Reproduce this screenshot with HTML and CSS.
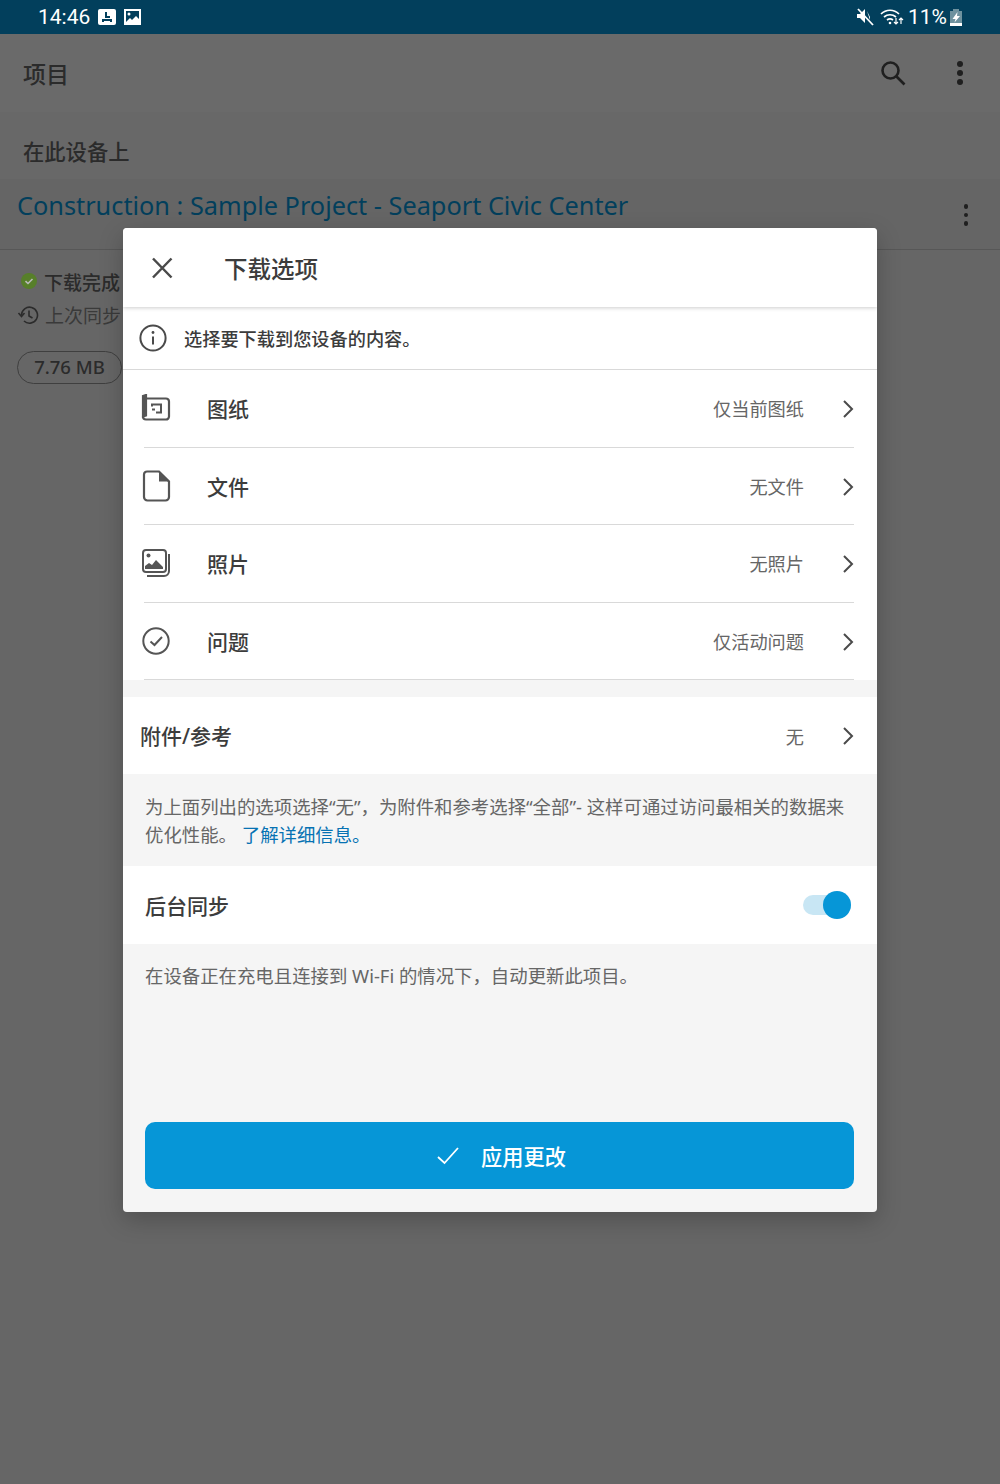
FILE: index.html
```html
<!DOCTYPE html>
<html lang="zh-CN">
<head>
  <meta charset="UTF-8">
  <meta name="viewport" content="width=device-width, initial-scale=1.0">
  <title>下载选项</title>
  <link rel="stylesheet" href="styles.css">
</head>
<body>
  <!-- Status bar -->
  <div class="status-bar">
    <div class="status-left">
      <span class="clock">14:46</span>
      <svg class="status-icon" width="18" height="16" viewBox="0 0 18 16"><path fill="#fff" d="M2 0h14a2 2 0 0 1 2 2v12a2 2 0 0 1-2 2H2a2 2 0 0 1-2-2V2a2 2 0 0 1 2-2z"/><path fill="none" stroke="#023f5c" stroke-width="2" d="M8 3v5h4M5 13v-2h8v2"/></svg>
      <svg class="status-icon" width="17" height="16" viewBox="0 0 17 16"><path fill="#fff" d="M0 0h17v16H0z"/><path fill="#023f5c" d="M2 2h13v8l-3-3-4 4-2-2-4 4z"/><circle cx="5" cy="5" r="1.5" fill="#fff"/></svg>
    </div>
    <div class="status-right">
      <svg width="18" height="18" viewBox="0 0 18 18"><path fill="#fff" d="M1 6h3l5-5v14l-5-5H1zM11 3l3 6v3z"/><path stroke="#fff" stroke-width="1.8" d="M2 1l15 16"/></svg>
      <svg width="24" height="18" viewBox="0 0 24 18" fill="none" stroke="#fff" stroke-width="1.7"><path d="M1 6c5-5 13-5 18 0M4 9c3.500-3 8.500-3 12 0M7 12c2-1.500 4-1.500 6 0"/><circle cx="10" cy="15" r="1.300" fill="#fff" stroke="none"/><path stroke-width="1.200" d="M16 10v6m-2-2l2 2 2-2M21 16v-6m-2 2l2-2 2 2"/></svg>
      <span class="battery-text">11%</span>
      <svg width="12" height="17" viewBox="0 0 12 17"><path fill="#6f929f" d="M3 0h6v2h3v15H0V2h3z"/><path fill="#fff" d="M7.500 3L2.500 10h3l-1 3.500 5.500-6.500H7z"/><path fill="#fff" d="M0 14h12v3H0z"/></svg>
    </div>
  </div>

  <!-- Dimmed page behind the dialog -->
  <div class="page">
    <div class="app-bar">
      <span class="app-title">项目</span>
      <div class="app-actions">
        <svg width="28" height="28" viewBox="0 0 28 28" fill="none" stroke="#1f1f1f" stroke-width="2.600"><circle cx="11.500" cy="11.500" r="8"/><path d="M17.500 17.500l8 8"/></svg>
        <span class="dots"><i></i><i></i><i></i></span>
      </div>
    </div>
    <div class="section-title">在此设备上</div>
    <div class="project-row">
      <span class="project-name">Construction : Sample Project - Seaport Civic Center</span>
      <span class="dots small"><i></i><i></i><i></i></span>
    </div>
    <div class="project-info">
      <div class="info-line">
        <svg class="done-icon" width="18" height="18" viewBox="0 0 18 18"><circle cx="9" cy="9" r="8" fill="#577f2a"/><path d="M5.500 9.200l2.500 2.300 4.500-4.500" fill="none" stroke="#bbb" stroke-width="1.600"/></svg>
        <span class="done">下载完成</span>
      </div>
      <div class="info-line">
        <svg width="22" height="20" viewBox="0 0 22 20" fill="none" stroke="#2b2b2b" stroke-width="1.600"><path d="M4.500 10a8 8 0 1 1 2.500 6"/><path d="M1.500 8l3 3.500 3-3.500"/><path d="M12 5.500V11l3.500 2"/></svg>
        <span class="sync">上次同步</span>
      </div>
      <span class="size-chip">7.76 MB</span>
    </div>
  </div>

  <!-- Download options dialog -->
  <div class="dialog">
    <div class="dialog-header">
      <svg width="24" height="24" viewBox="0 0 24 24" fill="none" stroke="#4a4a4a" stroke-width="2.500"><path d="M3 2.500l18.500 19M21.500 2.500L3 21.500"/></svg>
      <h2>下载选项</h2>
    </div>
    <div class="dialog-info">
      <svg width="28" height="28" viewBox="0 0 28 28" fill="none" stroke="#4a4a4a" stroke-width="2"><circle cx="14" cy="14" r="12.600"/><path stroke-width="2" d="M14 12.500v8"/><circle cx="14" cy="8.500" r="1.400" fill="#4a4a4a" stroke="none"/></svg>
      <span>选择要下载到您设备的内容。</span>
    </div>

    <div class="option-list">
      <div class="option">
        <svg class="option-icon" width="30" height="28" viewBox="0 0 30 28" fill="none" stroke="#555" stroke-width="2.200"><path d="M4 4.500h21a3 3 0 0 1 3 3v15a3 3 0 0 1-3 3H5a3 3 0 0 1-3-3"/><path fill="#555" d="M2 22.500V2l3-1v20.500z"/><path stroke-width="2" d="M11 12.500v-2h9v8h-5M11 15.500h3"/></svg>
        <span class="option-name">图纸</span>
        <span class="option-value">仅当前图纸</span>
        <svg class="chevron" width="12" height="18" viewBox="0 0 12 18" fill="none" stroke="#4a4a4a" stroke-width="2"><path d="M2 1l8 8-8 8"/></svg>
      </div>
      <div class="option">
        <svg class="option-icon" width="30" height="32" viewBox="0 0 30 32" fill="none" stroke="#555" stroke-width="2.200"><path d="M6 1.500h12l10 10V27a3.500 3.500 0 0 1-3.500 3.500h-18A3.500 3.500 0 0 1 3 27V4.500a3 3 0 0 1 3-3z"/><path fill="#555" stroke="none" d="M18 1.500l10 10H18z"/></svg>
        <span class="option-name">文件</span>
        <span class="option-value">无文件</span>
        <svg class="chevron" width="12" height="18" viewBox="0 0 12 18" fill="none" stroke="#4a4a4a" stroke-width="2"><path d="M2 1l8 8-8 8"/></svg>
      </div>
      <div class="option">
        <svg class="option-icon" width="30" height="28" viewBox="0 0 30 28" fill="none" stroke="#555" stroke-width="2"><rect x="2" y="1" width="23" height="22" rx="3"/><path d="M28 5v17a5 5 0 0 1-5 5H6"/><circle cx="7.500" cy="6.500" r="2" fill="#555" stroke="none"/><path fill="#555" stroke="none" d="M4 20v-3l4-3 3 2 4-5 7 7v2z"/></svg>
        <span class="option-name">照片</span>
        <span class="option-value">无照片</span>
        <svg class="chevron" width="12" height="18" viewBox="0 0 12 18" fill="none" stroke="#4a4a4a" stroke-width="2"><path d="M2 1l8 8-8 8"/></svg>
      </div>
      <div class="option">
        <svg class="option-icon" width="30" height="28" viewBox="0 0 30 28" fill="none" stroke="#555" stroke-width="2"><circle cx="15" cy="14" r="12.700"/><path stroke-width="2" d="M9.500 14.500l4 3.500 7.500-8"/></svg>
        <span class="option-name">问题</span>
        <span class="option-value">仅活动问题</span>
        <svg class="chevron" width="12" height="18" viewBox="0 0 12 18" fill="none" stroke="#4a4a4a" stroke-width="2"><path d="M2 1l8 8-8 8"/></svg>
      </div>
    </div>

    <div class="attach-row">
      <span class="row-title">附件/参考</span>
      <span class="option-value">无</span>
      <svg class="chevron" width="12" height="18" viewBox="0 0 12 18" fill="none" stroke="#4a4a4a" stroke-width="2"><path d="M2 1l8 8-8 8"/></svg>
    </div>
    <div class="note note-attach">为上面列出的选项选择“无”，为附件和参考选择“全部”- 这样可通过访问最相关的数据来优化性能。 <a href="#">了解详细信息。</a></div>
    <div class="sync-row">
      <span class="row-title">后台同步</span>
      <span class="toggle"><i></i></span>
    </div>
    <div class="dialog-footer">
      <div class="note">在设备正在充电且连接到 Wi-Fi 的情况下，自动更新此项目。</div>
      <button type="button">
        <svg width="24" height="20" viewBox="0 0 24 20" fill="none" stroke="#fff" stroke-width="1.800"><path d="M2 11l6.500 6L22 2"/></svg>
        应用更改
      </button>
    </div>
  </div>
</body>
</html>
```

FILE: styles.css
```css
* {
  margin: 0;
  padding: 0;
  box-sizing: border-box;
}

body {
  width: 1000px;
  height: 1484px;
  overflow: hidden;
  position: relative;
  font-family: "Noto Sans", "Noto Sans CJK SC", sans-serif;
  background: #666666;
  color: #2b2b2b;
}

svg {
  display: block;
  flex-shrink: 0;
}

/* Status bar */
.status-bar {
  height: 34px;
  background: #023f5c;
  color: #fff;
  display: flex;
  justify-content: space-between;
  align-items: center;
  padding: 0 38px 0 38px;
}

.status-left,
.status-right {
  display: flex;
  align-items: center;
}

.clock {
  font-family: Roboto, sans-serif;
  font-size: 21px;
  margin-right: 8px;
}

.status-icon {
  margin-right: 8px;
}

.status-right svg:first-child {
  margin-right: 6px;
}

.battery-text {
  font-family: Roboto, sans-serif;
  font-size: 21px;
  margin: 0 3px 0 4px;
}

/* Page behind the dialog */
.page {
  height: 1450px;
  background: #666666;
}

.app-bar {
  height: 78px;
  padding: 0 37px 0 23px;
  display: flex;
  justify-content: space-between;
  align-items: center;
  background: #6a6a6a;
}

.app-title {
  font-size: 23px;
  font-weight: 500;
}

.app-actions {
  display: flex;
  align-items: center;
  gap: 50px;
}

.dots {
  display: flex;
  flex-direction: column;
  gap: 3px;
}

.dots i {
  width: 6px;
  height: 6px;
  border-radius: 50%;
  background: #1f1f1f;
}

.dots.small {
  gap: 4px;
  margin-top: 2px;
  margin-right: 1px;
}

.dots.small i {
  width: 4.500px;
  height: 4.500px;
}

.section-title {
  height: 67px;
  padding: 25px 23px 0;
  font-size: 21.300px;
  font-weight: 500;
  line-height: 30px;
  background: #686868;
}

.project-row {
  height: 71px;
  padding: 0 31px 0 17px;
  display: flex;
  justify-content: space-between;
  align-items: center;
  background: #656565;
  border-bottom: 1px solid #575757;
}

.project-name {
  font-size: 25.300px;
  color: #023f5c;
  margin-top: -18px;
}

.project-info {
  padding: 15px 0 0 17px;
}

.info-line {
  display: flex;
  align-items: center;
  height: 33px;
  width: 106px;
  font-size: 19px;
  white-space: nowrap;
}

.info-line svg {
  margin-right: 6px;
}

.done-icon {
  margin-left: 3px;
  margin-top: -2px;
}

.done {
  font-weight: 500;
}

.sync {
  color: #3a3a3a;
}

.size-chip {
  display: block;
  width: 105px;
  height: 33px;
  margin-top: 20px;
  border: 1px solid #3f3f3f;
  border-radius: 17px;
  text-align: center;
  line-height: 29px;
  font-size: 18.500px;
  font-weight: 500;
  color: #2b2b2b;
}

/* Dialog */
.dialog {
  position: absolute;
  left: 123px;
  top: 228px;
  width: 754px;
  height: 984px;
  display: flex;
  flex-direction: column;
  background: #f5f5f5;
  border-radius: 4px;
  overflow: hidden;
  box-shadow: 0 8px 24px rgba(0, 0, 0, 0.22);
}

.dialog-header {
  height: 79px;
  padding: 0 0 0 27px;
  display: flex;
  align-items: center;
  background: #fff;
  box-shadow: 0 1px 4px rgba(0, 0, 0, 0.2);
  position: relative;
}

.dialog-header h2 {
  margin-left: 50px;
  font-size: 23.500px;
  font-weight: 500;
  color: #3c3c3c;
}

.dialog-info {
  height: 63px;
  padding-left: 16px;
  display: flex;
  align-items: center;
  gap: 17px;
  background: #fff;
  border-bottom: 1px solid #d9d9d9;
  font-size: 18.200px;
  font-weight: 500;
  color: #3c3c3c;
}

.option-list {
  background: #fff;
}

.option {
  height: 77.500px;
  margin-left: 21px;
  margin-right: 23px;
  display: flex;
  align-items: center;
  border-bottom: 1px solid #d9d9d9;
}

.option-icon {
  margin-left: -3px;
}

.option-name {
  margin-left: 36px;
  font-size: 21px;
  font-weight: 500;
  color: #3c3c3c;
}

.option-value {
  margin-left: auto;
  font-size: 18.200px;
  color: #666;
}

.chevron {
  margin-left: 38px;
  margin-top: 2px;
}

.attach-row {
  height: 77px;
  margin-top: 17px;
  padding: 0 23px 0 17px;
  display: flex;
  align-items: center;
  background: #fff;
}

.attach-row .row-title {
  margin-top: -2px;
}

.attach-row .chevron {
  margin-top: 0;
}

.row-title {
  font-size: 21px;
  font-weight: 500;
  color: #3c3c3c;
}

.note {
  padding: 0 22px;
  font-size: 18.400px;
  line-height: 28px;
  color: #666;
}

.note a {
  color: #0672b3;
  text-decoration: none;
}

.note-attach {
  height: 92px;
  padding-top: 19px;
  padding-right: 26px;
}

.sync-row {
  height: 78px;
  padding: 0 26px 0 22px;
  display: flex;
  justify-content: space-between;
  align-items: center;
  background: #fff;
}

.toggle {
  position: relative;
  width: 48px;
  height: 20px;
  border-radius: 10px;
  background: #c8e6f4;
}

.toggle i {
  position: absolute;
  right: 0;
  top: -4px;
  width: 28px;
  height: 28px;
  border-radius: 50%;
  background: #0696d7;
}

.dialog-footer {
  flex: 1;
  padding-top: 18px;
  display: flex;
  flex-direction: column;
}

.dialog-footer button {
  height: 67px;
  margin: 132px 23px 0 22px;
  padding-left: 3px;
  display: flex;
  justify-content: center;
  align-items: center;
  gap: 21px;
  background: #0696d7;
  border: none;
  border-radius: 10px;
  color: #fff;
  font-family: inherit;
  font-size: 21.200px;
  font-weight: 500;
}
```
